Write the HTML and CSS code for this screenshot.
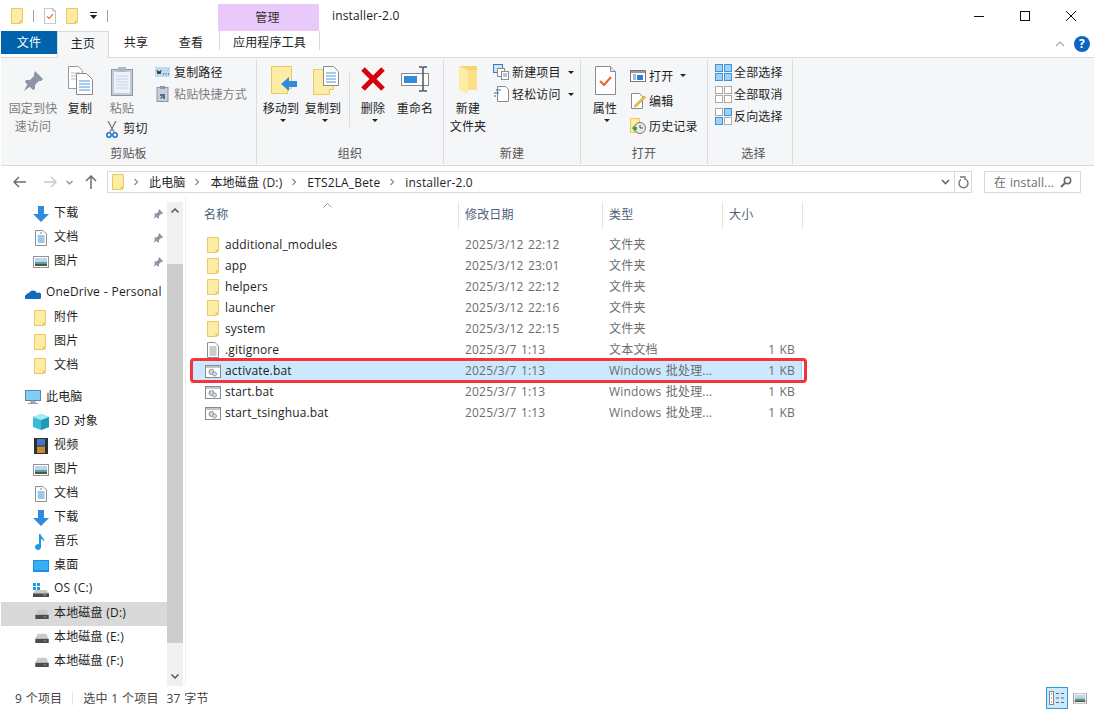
FILE: index.html
```html
<!DOCTYPE html>
<html lang="zh-CN">
<head>
    <meta charset="UTF-8">
    <title>installer-2.0</title>
    <link rel="stylesheet" href="styles.css">
</head>
<body>
    <svg class="defs" width="0" height="0">
        <symbol id="folder" viewBox="0 0 12 16">
            <path d="M.5.5h11v12.500h-2.500v2.500h-8.500z" fill="#fdeca6" stroke="#ecc95f"/>
            <path d="M9 13h2.500v2.500h-2.500z" fill="#ecc95f"/>
        </symbol>
        <symbol id="doc" viewBox="0 0 12 16">
            <path d="M.5.5h7.500l3.500 3.500v11.500h-11z" fill="#fff" stroke="#8f8f8f"/>
            <path d="M5 3h2M2.500 6h7M3 8h6.500M2.500 10h7M3 12h6.500" stroke="#3f8fd0"/>
        </symbol>
        <symbol id="pic" viewBox="0 0 16 12">
            <rect x=".5" y=".5" width="15" height="11" fill="#fff" stroke="#949494"/>
            <rect x="2" y="2" width="12" height="4" fill="#b9d7ee"/>
            <rect x="2" y="6" width="12" height="2" fill="#6c9a8e"/>
            <rect x="2" y="8" width="12" height="2" fill="#3d5e50"/>
        </symbol>
        <symbol id="down" viewBox="0 0 16 16">
            <path d="M5 0h6v8h5l-8 8-8-8h5z" fill="#2f8ae0"/>
        </symbol>
        <symbol id="pin" viewBox="0 0 12 12">
            <path d="M7 1l4 4-1 1-1 0-2 2v2l-1 .500-4-4 .500-1h2l2-2v-1zM3.500 7l1.500 1.500-3.500 2.500z" fill="#8d96a5"/>
        </symbol>
        <symbol id="drive" viewBox="0 0 16 12">
            <path d="M3 1h10l3 6v5h-16v-5z" fill="#c9c9c9"/>
            <rect y="7" width="16" height="5" fill="#4c4c4c"/>
            <rect x="10" y="9" width="3" height="1" fill="#4fd34f"/>
        </symbol>
        <symbol id="bat" viewBox="0 0 16 13">
            <rect x=".5" y=".5" width="15" height="12" fill="#fff" stroke="#8a8a8a"/>
            <rect x="1" y="1" width="14" height="2" fill="#c4c4c4"/>
            <circle cx="6.500" cy="7" r="2.500" fill="#d5d5d5" stroke="#8d8d8d"/>
            <circle cx="9.500" cy="9" r="2" fill="#cfe2f2" stroke="#7d9db8"/>
        </symbol>
        <symbol id="text" viewBox="0 0 12 16">
            <path d="M.5.5h7.500l3.500 3.500v11.500h-11z" fill="#fff" stroke="#8f8f8f"/>
            <path d="M2.500 5h7M2.500 7h7M2.500 9h7M2.500 11h7M2.500 13h7" stroke="#9a9a9a"/>
        </symbol>
        <symbol id="check" viewBox="0 0 21 29">
            <path d="M.5.5h15l5 5v23h-20z" fill="#fff" stroke="#8c8c8c"/>
            <path d="M15.500.5v5h5" fill="#e6e6e6" stroke="#8c8c8c"/>
            <path d="M5 15l4 4 7-8" fill="none" stroke="#e8622a" stroke-width="2"/>
        </symbol>
        <symbol id="grid" viewBox="0 0 17 17">
            <rect x=".5" y=".5" width="7" height="7"/>
            <rect x="9.500" y=".5" width="7" height="7"/>
            <rect x=".5" y="9.500" width="7" height="7"/>
            <rect x="9.500" y="9.500" width="7" height="7"/>
        </symbol>
        <symbol id="chev" viewBox="0 0 6 8">
            <path d="M1.500 1l3 3-3 3" fill="none" stroke="#8a8a8a" stroke-width="1.200"/>
        </symbol>
    </svg>

    <div class="window">
        <header class="titlebar">
            <div class="qat">
                <svg width="12" height="16"><use href="#folder"/></svg>
                <span class="qat-sep"></span>
                <svg width="12" height="16"><use href="#check"/></svg>
                <svg width="12" height="16"><use href="#folder"/></svg>
                <svg class="qat-more" width="7" height="7" viewBox="0 0 7 7"><path d="M0 0h7v1h-7zM0 3h7l-3.500 4z" fill="#222"/></svg>
                <span class="qat-sep"></span>
            </div>
            <div class="context-tab">管理</div>
            <div class="window-title">installer-2.0</div>
            <div class="window-buttons">
                <button class="win-btn"><svg width="10" height="10"><path d="M0 5.500h10" stroke="#111"/></svg></button>
                <button class="win-btn"><svg width="10" height="10"><rect x=".5" y=".5" width="9" height="9" fill="none" stroke="#111"/></svg></button>
                <button class="win-btn"><svg width="10" height="10"><path d="M0 0l10 10M10 0l-10 10" stroke="#111"/></svg></button>
            </div>
        </header>

        <nav class="tabs">
            <div class="tab tab-file">文件</div>
            <div class="tab tab-active">主页</div>
            <div class="tab tab-share">共享</div>
            <div class="tab tab-view">查看</div>
            <div class="tab tab-tools">应用程序工具</div>
            <div class="tabs-right">
                <svg width="10" height="6"><path d="M1 5l4-4 4 4" fill="none" stroke="#a8a8a8" stroke-width="1.200"/></svg>
                <span class="help">?</span>
            </div>
        </nav>

        <section class="ribbon">
            <div class="group group-clipboard">
                <div class="group-body">
                    <div class="big-btn w64 disabled">
                        <div class="big-icon"><svg class="pin-large" width="24" height="24"><use href="#pin"/></svg></div>
                        <div>固定到快<br>速访问</div>
                    </div>
                    <div class="big-btn w30">
                        <div class="big-icon">
                            <svg width="25" height="29" viewBox="0 0 25 29">
                                <path d="M.5.5h10l4 4v18h-14z" fill="#fff" stroke="#9a9a9a"/>
                                <path d="M3 7h9M3 10h9M3 13h9" stroke="#b9b9b9"/>
                                <path d="M8.500 7.500h10l6 6v15h-16z" fill="#fff" stroke="#8a8a8a"/>
                                <path d="M11 15h11M11 18h11M11 21h11M11 24h11" stroke="#4c93d8"/>
                            </svg>
                        </div>
                        <div>复制</div>
                    </div>
                    <div class="big-btn w54 paste">
                        <div class="big-icon">
                            <svg width="22" height="30" viewBox="0 0 22 30">
                                <rect x=".5" y="3.500" width="21" height="26" fill="#c3ccd8" stroke="#8c97a6"/>
                                <rect x="3" y="6" width="16" height="21" fill="#edf2f9"/>
                                <path d="M5 10h12M5 13h12M5 16h12M5 19h12M5 22h12" stroke="#c8d5e6"/>
                                <rect x="7" y="1" width="8" height="5" fill="#b0b8c4"/>
                            </svg>
                        </div>
                        <div class="muted">粘贴</div>
                        <div class="cut-row">
                            <svg width="12" height="17" viewBox="0 0 12 17">
                                <path d="M2 0l6 11M10 0l-6 11" stroke="#777" stroke-width="1.300"/>
                                <circle cx="3" cy="14" r="2.200" fill="none" stroke="#1f74c9" stroke-width="1.500"/>
                                <circle cx="9" cy="14" r="2.200" fill="none" stroke="#1f74c9" stroke-width="1.500"/>
                            </svg>
                            <span>剪切</span>
                        </div>
                    </div>
                    <div class="small-col">
                        <div class="small-row path-row">
                            <svg width="15" height="10" viewBox="0 0 15 10"><rect width="15" height="10" fill="#bcdcf4"/><path d="M2 3l1 4 1-3 1 3 1-4M8 7h1M10.500 7h1M13 7h1" fill="none" stroke="#333"/></svg>
                            <span>复制路径</span>
                        </div>
                        <div class="small-row path-row muted">
                            <svg width="15" height="16" viewBox="0 0 15 16"><rect x="2" y="1.500" width="11" height="14" fill="#c5cfdb" stroke="#8c97a6"/><rect x="5" y="0" width="5" height="3" fill="#8c97a6"/><path d="M5 8h5v5h-2v-2l-2 2-1-1 2-2h-2z" fill="#5b6b80"/></svg>
                            <span>粘贴快捷方式</span>
                        </div>
                    </div>
                </div>
                <div class="group-label">剪贴板</div>
            </div>

            <div class="group group-organize">
                <div class="group-body">
                    <div class="big-btn w42">
                        <div class="big-icon">
                            <svg class="nudge-right" width="26" height="28" viewBox="0 0 26 28">
                                <path d="M.5.5h20v22h-4v5h-16z" fill="#fdeca6" stroke="#ecc95f"/>
                                <path d="M10 18l8-7v4h8v6h-8v4z" fill="#2f8ae0"/>
                            </svg>
                        </div>
                        <div>移动到</div>
                        <span class="caret"></span>
                    </div>
                    <div class="big-btn w42">
                        <div class="big-icon">
                            <svg class="nudge-right" width="26" height="29" viewBox="0 0 26 29">
                                <path d="M.5 3.500h20v20h-4v5h-16z" fill="#fdeca6" stroke="#ecc95f"/>
                                <path d="M10.500.5h10l5 5v14h-15z" fill="#fff" stroke="#8a8a8a"/>
                                <path d="M13 7h10M13 10h10M13 13h10M13 16h10" stroke="#4c93d8"/>
                            </svg>
                        </div>
                        <div>复制到</div>
                        <span class="caret"></span>
                    </div>
                    <span class="inner-sep"></span>
                    <div class="big-btn w46">
                        <div class="big-icon">
                            <svg width="26" height="26" viewBox="0 0 26 26"><path d="M3 3l20 20M23 3l-20 20" stroke="#d8000c" stroke-width="5"/></svg>
                        </div>
                        <div>删除</div>
                        <span class="caret"></span>
                    </div>
                    <div class="big-btn w38">
                        <div class="big-icon">
                            <svg width="28" height="26" viewBox="0 0 28 26">
                                <rect x=".5" y="7.500" width="27" height="12" fill="#fff" stroke="#8a8a8a"/>
                                <rect x="3" y="10" width="13" height="7" fill="#2f8ae0"/>
                                <path d="M18 1h3l1 1 1-1h3M22 2v22M18 25h3l1-1 1 1h3" fill="none" stroke="#555" stroke-width="1.500"/>
                            </svg>
                        </div>
                        <div>重命名</div>
                    </div>
                </div>
                <div class="group-label">组织</div>
            </div>

            <div class="group group-new">
                <div class="group-body">
                    <div class="big-btn w48">
                        <div class="big-icon">
                            <svg width="19" height="28" viewBox="0 0 19 28">
                                <path d="M0 0h18v24h-18z" fill="#f5d372"/>
                                <path d="M0 0l9 4v24l-9-4z" fill="#fdeca6"/>
                                <path d="M9 4h9v20h-9z" fill="#fbe08a"/>
                            </svg>
                        </div>
                        <div>新建<br>文件夹</div>
                    </div>
                    <div class="small-col">
                        <div class="small-row">
                            <svg width="16" height="16" viewBox="0 0 16 16"><rect x=".5" y=".5" width="9" height="8" fill="#cfe5f7" stroke="#3f7db5"/><rect x="4.500" y="4.500" width="7" height="8" fill="#fff" stroke="#8a8a8a"/><rect x="8.500" y="7.500" width="7" height="8" fill="#fff" stroke="#8a8a8a"/><path d="M10 10h4M10 12h4" stroke="#4c93d8"/></svg>
                            <span>新建项目</span><span class="caret caret-inline"></span>
                        </div>
                        <div class="small-row">
                            <svg width="16" height="16" viewBox="0 0 16 16"><path d="M4.500.5h8l3 3v12h-11z" fill="#fff" stroke="#8a8a8a"/><path d="M3 4h5M1 7h5M3 10h-2" stroke="#1f6fb5" stroke-width="1.200"/></svg>
                            <span>轻松访问</span><span class="caret caret-inline"></span>
                        </div>
                    </div>
                </div>
                <div class="group-label">新建</div>
            </div>

            <div class="group group-open">
                <div class="group-body">
                    <div class="big-btn w48">
                        <div class="big-icon"><svg width="21" height="29"><use href="#check"/></svg></div>
                        <div>属性</div>
                        <span class="caret"></span>
                    </div>
                    <div class="small-col small-col-wide">
                        <div class="small-row">
                            <svg width="16" height="12" viewBox="0 0 16 12"><rect x=".5" y=".5" width="15" height="11" fill="#fff" stroke="#777"/><rect x="1" y="1" width="14" height="2" fill="#9a9a9a"/><rect x="7" y="5" width="6" height="5" fill="#2f7fc8"/><path d="M3 5h3M3 7h3M3 9h3" stroke="#2f7fc8"/></svg>
                            <span>打开</span><span class="caret caret-inline"></span>
                        </div>
                        <div class="small-row">
                            <svg width="16" height="16" viewBox="0 0 16 16"><path d="M1.500.5h8l3 3v12h-11z" fill="#fff" stroke="#8a8a8a"/><path d="M5 12l9-9 1.500 1.500-9 9-2 .5z" fill="#f4c542" stroke="#b98a1e" stroke-width=".6"/></svg>
                            <span>编辑</span>
                        </div>
                        <div class="small-row">
                            <svg width="16" height="16" viewBox="0 0 16 16"><path d="M.5.5h9v14h-9z" fill="#fdeca6" stroke="#ecc95f"/><circle cx="10" cy="10" r="5.500" fill="#e8e8e8" stroke="#777"/><path d="M10 7v3h3" fill="none" stroke="#555"/><path d="M2 10l3-3v2h2v3h-2v2z" fill="#3aa53a"/></svg>
                            <span>历史记录</span>
                        </div>
                    </div>
                </div>
                <div class="group-label">打开</div>
            </div>

            <div class="group group-select">
                <div class="group-body">
                    <div class="small-col">
                        <div class="small-row">
                            <svg class="grid-all" width="17" height="17"><use href="#grid"/></svg>
                            <span>全部选择</span>
                        </div>
                        <div class="small-row">
                            <svg class="grid-none" width="17" height="17"><use href="#grid"/></svg>
                            <span>全部取消</span>
                        </div>
                        <div class="small-row">
                            <svg width="17" height="17" viewBox="0 0 17 17"><rect x=".5" y=".5" width="7" height="7" fill="#fff" stroke="#aaa"/><rect x="9.500" y=".5" width="7" height="7" fill="#9fd0f5" stroke="#3f93d8"/><rect x=".5" y="9.500" width="7" height="7" fill="#9fd0f5" stroke="#3f93d8"/><rect x="9.500" y="9.500" width="7" height="7" fill="#fff" stroke="#aaa"/></svg>
                            <span>反向选择</span>
                        </div>
                    </div>
                </div>
                <div class="group-label">选择</div>
            </div>
        </section>

        <div class="addressbar">
            <div class="nav-buttons">
                <svg width="14" height="12" viewBox="0 0 14 12"><path d="M6 1l-5 5 5 5M1 6h12" fill="none" stroke="#6d6d6d" stroke-width="1.500"/></svg>
                <svg class="nav-forward" width="14" height="12" viewBox="0 0 14 12"><path d="M8 1l5 5-5 5M13 6h-12" fill="none" stroke="#c9c9c9" stroke-width="1.500"/></svg>
                <svg class="nav-recent" width="7" height="5" viewBox="0 0 7 5"><path d="M.5 1l3 3 3-3" fill="none" stroke="#8a8a8a" stroke-width="1.200"/></svg>
                <svg class="nav-up" width="12" height="14" viewBox="0 0 12 14"><path d="M1 6l5-5 5 5M6 1v13" fill="none" stroke="#6d6d6d" stroke-width="1.500"/></svg>
            </div>
            <div class="path-box">
                <svg width="12" height="16"><use href="#folder"/></svg>
                <svg class="crumb-sep" width="6" height="8"><use href="#chev"/></svg>
                <span>此电脑</span>
                <svg class="crumb-sep" width="6" height="8"><use href="#chev"/></svg>
                <span>本地磁盘 (D:)</span>
                <svg class="crumb-sep" width="6" height="8"><use href="#chev"/></svg>
                <span>ETS2LA_Bete</span>
                <svg class="crumb-sep" width="6" height="8"><use href="#chev"/></svg>
                <span>installer-2.0</span>
                <div class="path-end">
                    <svg width="9" height="6" viewBox="0 0 9 6"><path d="M1 1l3.500 3.500 3.500-3.500" fill="none" stroke="#666" stroke-width="1.600"/></svg>
                    <span class="refresh">
                        <svg width="11" height="13" viewBox="0 0 11 13"><path d="M3 3.500a4.500 4.500 0 1 0 5 0M2 1h5v3" fill="none" stroke="#777" stroke-width="1.400"/></svg>
                    </span>
                </div>
            </div>
            <div class="search-box">
                <span>在 install...</span>
                <svg width="12" height="12" viewBox="0 0 12 12"><circle cx="7.500" cy="4.500" r="3.200" fill="none" stroke="#666" stroke-width="1.500"/><path d="M5 7l-4 4" stroke="#666" stroke-width="2"/></svg>
            </div>
        </div>

        <main class="main">
            <aside class="sidebar">
                <div class="side-item sub"><svg width="16" height="16"><use href="#down"/></svg><span>下载</span><svg class="side-pin" width="12" height="12"><use href="#pin"/></svg></div>
                <div class="side-item sub"><svg width="16" height="16" viewBox="-2 0 16 16"><use href="#doc" width="12" height="16"/></svg><span>文档</span><svg class="side-pin" width="12" height="12"><use href="#pin"/></svg></div>
                <div class="side-item sub"><svg width="16" height="12"><use href="#pic"/></svg><span>图片</span><svg class="side-pin" width="12" height="12"><use href="#pin"/></svg></div>

                <div class="side-item top gap">
                    <svg width="16" height="10" viewBox="0 0 16 10"><path d="M2 10a2 2 0 0 1-1-4 3 3 0 0 1 3-2 4.500 4.500 0 0 1 8 0 3 3 0 0 1 3 6z" fill="#0f6cbd"/></svg>
                    <span>OneDrive - Personal</span>
                </div>
                <div class="side-item sub"><svg class="side-folder" width="12" height="16"><use href="#folder"/></svg><span>附件</span></div>
                <div class="side-item sub"><svg class="side-folder" width="12" height="16"><use href="#folder"/></svg><span>图片</span></div>
                <div class="side-item sub"><svg class="side-folder" width="12" height="16"><use href="#folder"/></svg><span>文档</span></div>

                <div class="side-item top gap">
                    <svg width="16" height="15" viewBox="0 0 16 15"><rect x=".5" y=".5" width="15" height="10" fill="#7cd0f5" stroke="#6b8296"/><path d="M6 11h4v2h-4zM3 13.500h10" stroke="#8a9aa8" fill="#b8c4ce"/></svg>
                    <span>此电脑</span>
                </div>
                <div class="side-item sub"><svg width="16" height="16" viewBox="0 0 16 16"><path d="M8 0l8 3v10l-8 3-8-3v-10z" fill="#38bcd6"/><path d="M8 6l8-3v10l-8 3z" fill="#1d9ab8"/><path d="M0 3l8-3 8 3-8 3z" fill="#a3eaf5"/></svg><span>3D 对象</span></div>
                <div class="side-item sub"><svg class="side-video" width="14" height="16" viewBox="0 0 14 16"><rect width="14" height="16" fill="#2f2f2f"/><rect x="3" y="1" width="8" height="6.500" fill="#3f78c8"/><rect x="3" y="8.500" width="8" height="6.500" fill="#c98a2e"/></svg><span>视频</span></div>
                <div class="side-item sub"><svg width="16" height="12"><use href="#pic"/></svg><span>图片</span></div>
                <div class="side-item sub"><svg width="16" height="16" viewBox="-2 0 16 16"><use href="#doc" width="12" height="16"/></svg><span>文档</span></div>
                <div class="side-item sub"><svg width="16" height="16"><use href="#down"/></svg><span>下载</span></div>
                <div class="side-item sub"><svg width="16" height="16" viewBox="0 0 16 16"><path d="M6 0h1.500c.5 3 4.500 4 3.500 8-.5-2-2-3-3-3v8a3 3 0 1 1-2-2.800z" fill="#1a9be8"/></svg><span>音乐</span></div>
                <div class="side-item sub"><svg width="16" height="12" viewBox="0 0 16 12"><rect width="16" height="12" fill="#1a8fe0"/><rect x="1" y="1" width="14" height="9" fill="#35b0f2"/></svg><span>桌面</span></div>
                <div class="side-item sub"><svg width="16" height="14" viewBox="0 0 16 14"><rect width="3" height="3" fill="#1a9be8"/><rect x="4" width="3" height="3" fill="#1a9be8"/><rect y="4" width="3" height="3" fill="#1a9be8"/><rect x="4" y="4" width="3" height="3" fill="#1a9be8"/><path d="M3 7h10l3 3v4h-16v-4z" fill="#c9c9c9"/><rect y="10.500" width="16" height="3.500" fill="#4c4c4c"/><rect x="10" y="11.500" width="3" height="1" fill="#4fd34f"/></svg><span>OS (C:)</span></div>
                <div class="side-item sub selected"><svg class="drive-icon" width="14" height="10"><use href="#drive"/></svg><span>本地磁盘 (D:)</span></div>
                <div class="side-item sub"><svg class="drive-icon" width="14" height="10"><use href="#drive"/></svg><span>本地磁盘 (E:)</span></div>
                <div class="side-item sub"><svg class="drive-icon" width="14" height="10"><use href="#drive"/></svg><span>本地磁盘 (F:)</span></div>
            </aside>

            <div class="scrollbar">
                <div class="scroll-btn"><svg width="8" height="5" viewBox="0 0 8 5"><path d="M.5 4.500l3.500-3.500 3.500 3.500" fill="none" stroke="#555" stroke-width="1.500"/></svg></div>
                <div class="scroll-thumb"></div>
                <div class="scroll-track"></div>
                <div class="scroll-btn"><svg width="8" height="5" viewBox="0 0 8 5"><path d="M.5.5l3.500 3.500 3.500-3.500" fill="none" stroke="#555" stroke-width="1.500"/></svg></div>
            </div>

            <section class="filelist">
                <svg class="sort-mark" width="9" height="5" viewBox="0 0 9 5"><path d="M.5 4.500l4-4 4 4" fill="none" stroke="#a0a0a0"/></svg>
                <div class="file-head">
                    <div class="head-cell head-name">名称</div>
                    <div class="head-cell">修改日期</div>
                    <div class="head-cell">类型</div>
                    <div class="head-cell">大小</div>
                </div>
                <div class="file-row"><div class="cell-name"><svg width="12" height="16"><use href="#folder"/></svg><span>additional_modules</span></div><div class="cell">2025/3/12 22:12</div><div class="cell">文件夹</div><div class="cell-size"></div></div>
                <div class="file-row"><div class="cell-name"><svg width="12" height="16"><use href="#folder"/></svg><span>app</span></div><div class="cell">2025/3/12 23:01</div><div class="cell">文件夹</div><div class="cell-size"></div></div>
                <div class="file-row"><div class="cell-name"><svg width="12" height="16"><use href="#folder"/></svg><span>helpers</span></div><div class="cell">2025/3/12 22:12</div><div class="cell">文件夹</div><div class="cell-size"></div></div>
                <div class="file-row"><div class="cell-name"><svg width="12" height="16"><use href="#folder"/></svg><span>launcher</span></div><div class="cell">2025/3/12 22:16</div><div class="cell">文件夹</div><div class="cell-size"></div></div>
                <div class="file-row"><div class="cell-name"><svg width="12" height="16"><use href="#folder"/></svg><span>system</span></div><div class="cell">2025/3/12 22:15</div><div class="cell">文件夹</div><div class="cell-size"></div></div>
                <div class="file-row"><div class="cell-name"><svg width="12" height="16"><use href="#text"/></svg><span>.gitignore</span></div><div class="cell">2025/3/7 1:13</div><div class="cell">文本文档</div><div class="cell-size">1 KB</div></div>
                <div class="file-row row-selected"><div class="cell-name"><svg class="bat-icon" width="16" height="13"><use href="#bat"/></svg><span>activate.bat</span></div><div class="cell">2025/3/7 1:13</div><div class="cell">Windows 批处理...</div><div class="cell-size">1 KB</div></div>
                <div class="file-row"><div class="cell-name"><svg class="bat-icon" width="16" height="13"><use href="#bat"/></svg><span>start.bat</span></div><div class="cell">2025/3/7 1:13</div><div class="cell">Windows 批处理...</div><div class="cell-size">1 KB</div></div>
                <div class="file-row"><div class="cell-name"><svg class="bat-icon" width="16" height="13"><use href="#bat"/></svg><span>start_tsinghua.bat</span></div><div class="cell">2025/3/7 1:13</div><div class="cell">Windows 批处理...</div><div class="cell-size">1 KB</div></div>
                <div class="highlight-box"></div>
            </section>
        </main>

        <footer class="statusbar">
            <span>9 个项目</span>
            <span class="status-sep"></span>
            <span>选中 1 个项目</span>
            <span class="status-bytes">37 字节</span>
            <div class="view-buttons">
                <span class="view-btn view-on">
                    <svg width="16" height="14" viewBox="0 0 16 14"><rect x=".5" y=".5" width="4" height="13" fill="#fff" stroke="#888"/><path d="M2 3h1" stroke="#444"/><path d="M2 7h1" stroke="#3f8fd0"/><path d="M2 11h1" stroke="#c0392b"/><path d="M7 2.500h3M12 2.500h3M7 7h3M12 7h3M7 11.500h3M12 11.500h3" stroke="#666"/></svg>
                </span>
                <span class="view-btn view-large">
                    <svg width="14" height="11" viewBox="0 0 16 12"><use href="#pic"/></svg>
                </span>
            </div>
        </footer>
    </div>
</body>
</html>
```

FILE: styles.css
```css
* {
    box-sizing: border-box;
}

html, body {
    margin: 0;
    padding: 0;
    height: 100%;
    background-color: #fff;
    overflow: hidden;
}

body {
    font-family: "Open Sans", "Noto Sans CJK SC", sans-serif;
    font-size: 12px;
    letter-spacing: .15px;
    word-spacing: .5px;
    color: #1e1e1e;
}

svg {
    flex-shrink: 0;
    display: block;
}

.defs {
    position: absolute;
}

.window {
    height: 710px;
    padding: 0 1px;
    display: flex;
    flex-direction: column;
}

/* title bar */
.titlebar {
    height: 31px;
    display: flex;
}

.qat {
    width: 217px;
    display: flex;
    align-items: center;
    padding: 0 0 0 10px;
    gap: 10px;
}

.qat-sep {
    width: 1px;
    height: 12px;
    background-color: #a0a0a0;
}

.qat-more {
    margin-left: 2px;
}

.context-tab {
    width: 101px;
    height: 27px;
    margin-top: 4px;
    background-color: #e8c9f9;
    text-align: center;
    line-height: 27px;
    color: #333;
    padding-right: 2px;
}

.window-title {
    padding-left: 13px;
    line-height: 31px;
    flex: 1;
}

.window-buttons {
    display: flex;
}

.win-btn {
    width: 46px;
    height: 31px;
    border: none;
    background: none;
    padding: 0;
    display: flex;
    align-items: center;
    justify-content: center;
}

/* tabs */
.tabs {
    height: 26px;
    display: flex;
}

.tab {
    text-align: center;
    line-height: 24px;
    height: 26px;
}

.tab-file {
    width: 56px;
    height: 23px;
    background-color: #0062ad;
    color: #fff;
    line-height: 23px;
}

.tab-active {
    width: 52px;
    height: 27px;
    background-color: #f5f6f7;
    border: 1px solid #d9d9d9;
    border-bottom: none;
    z-index: 1;
}

.tab-share {
    width: 54px;
}

.tab-view {
    width: 56px;
}

.tab-tools {
    width: 101px;
    height: 19px;
    border-left: 1px solid #d9d9d9;
    border-right: 1px solid #d9d9d9;
    line-height: 24px;
}

.tabs-right {
    margin-left: auto;
    display: flex;
    align-items: center;
    gap: 9px;
    padding-right: 4px;
    height: 26px;
}

.help {
    width: 16px;
    height: 16px;
    border-radius: 50%;
    background-color: #0f66c0;
    color: #fff;
    font-weight: 700;
    text-align: center;
    line-height: 16px;
    font-size: 12px;
}

/* ribbon */
.ribbon {
    height: 109px;
    display: flex;
    background-color: #f5f6f7;
    border-top: 1px solid #d9d9d9;
    border-bottom: 1px solid #d9d9d9;
    padding: 2px 0 1px;
}

.group {
    display: flex;
    flex-direction: column;
    border-right: 1px solid #dcdcdc;
}

.group-clipboard { width: 256px; }
.group-organize { width: 187px; padding-left: 3px; }
.group-new { width: 137px; }
.group-open { width: 127px; }
.group-select { width: 85px; padding-left: 7px; }

.group-body {
    height: 83px;
    display: flex;
}

.group-label {
    height: 21px;
    line-height: 21px;
    text-align: center;
    color: #555;
}

.group-organize .group-label {
    padding-right: 3px;
}

.big-btn {
    display: flex;
    flex-direction: column;
    align-items: center;
    text-align: center;
    line-height: 18px;
    padding-top: 6px;
    white-space: nowrap;
}

.big-icon {
    height: 34px;
}

.pin-large {
    margin-top: 3px;
}

.nudge-right {
    margin-left: 6px;
}

.w30 { width: 30px; }
.w38 { width: 38px; }
.w42 { width: 42px; }
.w46 { width: 46px; }
.w48 { width: 48px; }
.w54 { width: 54px; }
.w64 { width: 64px; }

.disabled, .muted {
    color: #7d7d7d;
}

.cut-row {
    display: flex;
    align-items: center;
    gap: 5px;
    margin: 2px 0 0 10px;
    color: #1e1e1e;
}

.caret {
    width: 0;
    height: 0;
    border-left: 3px solid transparent;
    border-right: 3px solid transparent;
    border-top: 3px solid #222;
    margin: 1px 0 0 4px;
}

.caret-inline {
    margin: 0 0 0 4px;
}

.inner-sep {
    width: 1px;
    height: 54px;
    margin: 13px 0 0 5px;
    background-color: #dcdcdc;
}

.small-col {
    padding: 1px 0 0 6px;
}

.group-new .small-col,
.group-open .small-col {
    padding-left: 1px;
}

.group-select .small-col {
    padding-left: 0;
}

.small-row {
    height: 22px;
    display: flex;
    align-items: center;
    gap: 3px;
    white-space: nowrap;
}

.path-row {
    gap: 4px;
}

.group-select .small-row {
    gap: 2px;
}

.small-col-wide {
    padding-top: 3px;
}

.small-col-wide .small-row {
    height: 25px;
}

.grid-all {
    fill: #9fd0f5;
    stroke: #3f93d8;
}

.grid-none {
    fill: #fff;
    stroke: #aaa;
}

/* address bar */
.addressbar {
    height: 31px;
    display: flex;
    padding-top: 5px;
}

.nav-buttons {
    width: 106px;
    height: 22px;
    display: flex;
    align-items: center;
    padding-left: 12px;
}

.nav-forward {
    margin-left: 16px;
}

.nav-recent {
    margin-left: 9px;
}

.nav-up {
    margin-left: 12px;
}

.path-box {
    width: 865px;
    height: 22px;
    border: 1px solid #d9d9d9;
    display: flex;
    align-items: center;
    padding-left: 4px;
    white-space: nowrap;
}

.crumb-sep {
    margin: 0 10px 0 9px;
}

.path-end {
    margin-left: auto;
    display: flex;
    align-items: center;
    height: 100%;
    gap: 4px;
}

.refresh {
    width: 17px;
    height: 100%;
    border-left: 1px solid #d9d9d9;
    display: flex;
    align-items: center;
    justify-content: center;
}

.search-box {
    width: 97px;
    height: 22px;
    margin-left: 12px;
    border: 1px solid #d9d9d9;
    display: flex;
    align-items: center;
    justify-content: space-between;
    padding: 0 8px 0 9px;
    color: #6d6d6d;
}

/* main */
.main {
    height: 490px;
    display: flex;
    overflow: hidden;
}

.sidebar {
    width: 166px;
    padding-top: 5px;
}

.side-item {
    height: 24px;
    display: flex;
    align-items: center;
    white-space: nowrap;
    position: relative;
}

.side-item span {
    padding-bottom: 4px;
}

.side-item svg {
    margin-right: 5px;
}

.side-item.sub {
    padding-left: 32px;
}

.side-item.top {
    padding-left: 24px;
}

.side-item.gap {
    margin-top: 8px;
}

.side-item .side-folder {
    margin-left: 1px;
    margin-right: 8px;
}

.side-item .drive-icon {
    margin-left: 2px;
    margin-right: 5px;
}

.side-item .side-video {
    margin-left: 1px;
    margin-right: 6px;
}

.side-item .side-pin {
    position: absolute;
    right: 3px;
    top: 6px;
    margin: 0;
}

.selected {
    background-color: #d9d9d9;
}

.scrollbar {
    width: 16px;
    display: flex;
    flex-direction: column;
    background-color: #f0f0f0;
    margin-top: 5px;
}

.scroll-btn {
    height: 17px;
    display: flex;
    align-items: center;
    justify-content: center;
}

.scroll-btn:first-child {
    height: 62px;
    align-items: flex-start;
    padding-top: 6px;
}

.scroll-btn:last-child {
    height: 43px;
    padding-top: 24px;
}

.scroll-thumb {
    height: 381px;
    background-color: #cdcdcd;
}

.scroll-track {
    flex: 1;
}

.filelist {
    position: relative;
    flex: 1;
    margin-left: 2px;
    border-left: 1px solid #f0f0f0;
    padding: 5px 0 0 6px;
}

.sort-mark {
    position: absolute;
    left: 137px;
    top: 6px;
}

.file-head {
    width: 611px;
    height: 27px;
    display: grid;
    grid-template-columns: 267px 144px 120px 80px;
    margin-bottom: 6px;
}

.head-cell {
    border-right: 1px solid #e5e5e5;
    padding: 2px 0 0 6px;
    line-height: 22px;
    color: #4c607a;
}

.head-name {
    padding-left: 12px;
}

.file-row {
    width: 610px;
    height: 21px;
    display: grid;
    grid-template-columns: 266px 144px 120px 80px;
    align-items: center;
    white-space: nowrap;
    color: #6d6d6d;
}

.row-selected {
    background-color: #cce8ff;
    box-shadow: inset 1px 0 #99d1ff, inset -1px 0 #99d1ff;
}

.cell-name {
    display: flex;
    align-items: center;
    gap: 6px;
    padding-left: 15px;
    color: #1e1e1e;
}

.cell-name span {
    padding-bottom: 2px;
}

.bat-icon {
    margin-left: -2px;
    margin-right: -2px;
}

.cell {
    padding: 0 0 2px 7px;
    letter-spacing: .2px;
    word-spacing: 1px;
}

.cell-size {
    text-align: right;
    padding: 0 7px 2px 0;
    word-spacing: 1px;
}

.highlight-box {
    position: absolute;
    left: 4px;
    top: 161px;
    width: 617px;
    height: 25px;
    border: 3px solid #f5333a;
    border-radius: 4px;
}

/* status bar */
.statusbar {
    height: 24px;
    display: flex;
    align-items: center;
    padding-left: 14px;
    color: #444;
}

.status-sep {
    width: 1px;
    height: 14px;
    margin: 0 10px 0 10px;
    background-color: #e5e5e5;
}

.status-bytes {
    margin-left: 8px;
}

.view-buttons {
    margin-left: auto;
    display: flex;
    align-items: center;
    gap: 4px;
    padding-right: 7px;
}

.view-btn {
    width: 22px;
    height: 22px;
    display: flex;
    align-items: center;
    justify-content: center;
}

.view-large {
    width: 15px;
}

.view-on {
    background-color: #cce8ff;
    border: 1px solid #26a0da;
}
```
